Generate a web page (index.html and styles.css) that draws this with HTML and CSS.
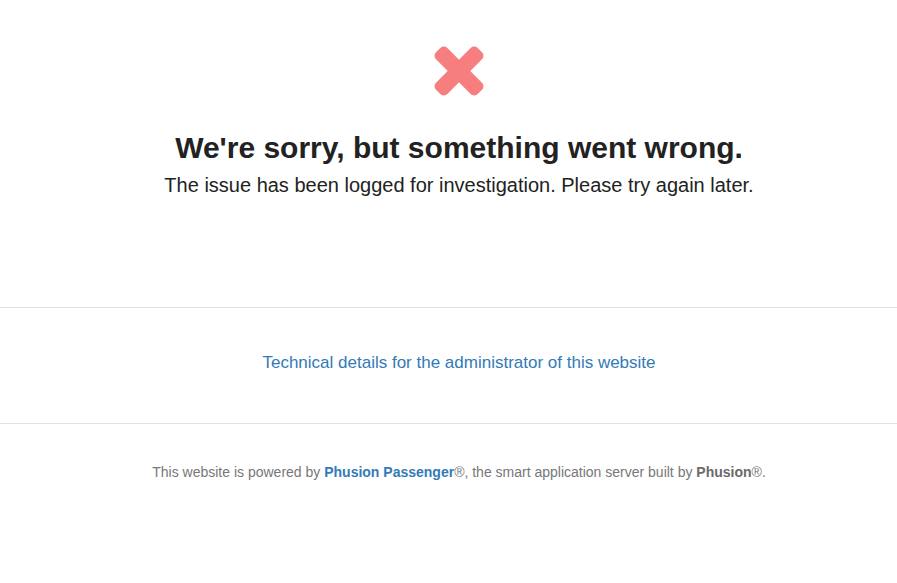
FILE: index.html
```html
<!DOCTYPE html>
<html lang="en">
<head>
    <meta charset="UTF-8">
    <title>We're sorry, but something went wrong</title>
    <link rel="stylesheet" href="styles.css">
</head>
<body>
    <div class="container">
        <section class="summary">
            <svg class="error-icon" width="54" height="54" viewBox="0 0 54 54" aria-hidden="true">
                <rect x="-2.5" y="19" width="59" height="16" rx="5" transform="rotate(45 27 27)" />
                <rect x="-2.5" y="19" width="59" height="16" rx="5" transform="rotate(-45 27 27)" />
            </svg>
            <h1>We're sorry, but something went wrong.</h1>
            <p class="lead">The issue has been logged for investigation. Please try again later.</p>
        </section>

        <section class="details">
            <a href="#">Technical details for the administrator of this website</a>
        </section>

        <footer class="powered">
            This website is powered by <a href="#">Phusion Passenger</a>&reg;, the smart application server built by <b>Phusion</b>&reg;.
        </footer>
    </div>
</body>
</html>
```

FILE: styles.css
```css
body {
    margin: 0;
    background: #fff;
    color: #222;
    font-family: "Liberation Sans", Arial, sans-serif;
}

/* content sits a little right of centre */
.summary, .details, .powered {
    padding-left: 21px;
    text-align: center;
}

.summary {
    padding-top: 44px;
    padding-bottom: 109px;
    border-bottom: 1px solid #e3e3e3;
}

.error-icon {
    display: block;
    margin: 0 auto;
}
.error-icon rect {
    fill: #f67e7e;
}

h1 {
    font-size: 30px;
    font-weight: bold;
    margin: 33px 0 0;
    line-height: 34px;
}

.lead {
    font-size: 20px;
    margin: 7px 0 0;
    line-height: 26px;
}

.details {
    padding-top: 45px;
    padding-bottom: 50px;
    border-bottom: 1px solid #e3e3e3;
}
.details a {
    color: #337ab7;
    font-size: 17px;
    text-decoration: none;
    line-height: 20px;
}

.powered {
    color: #777;
    font-size: 14px;
    padding-top: 40px;
}
.powered a {
    color: #337ab7;
    font-weight: bold;
    text-decoration: none;
}
.powered b {
    color: #6a6a6a;
}
```
